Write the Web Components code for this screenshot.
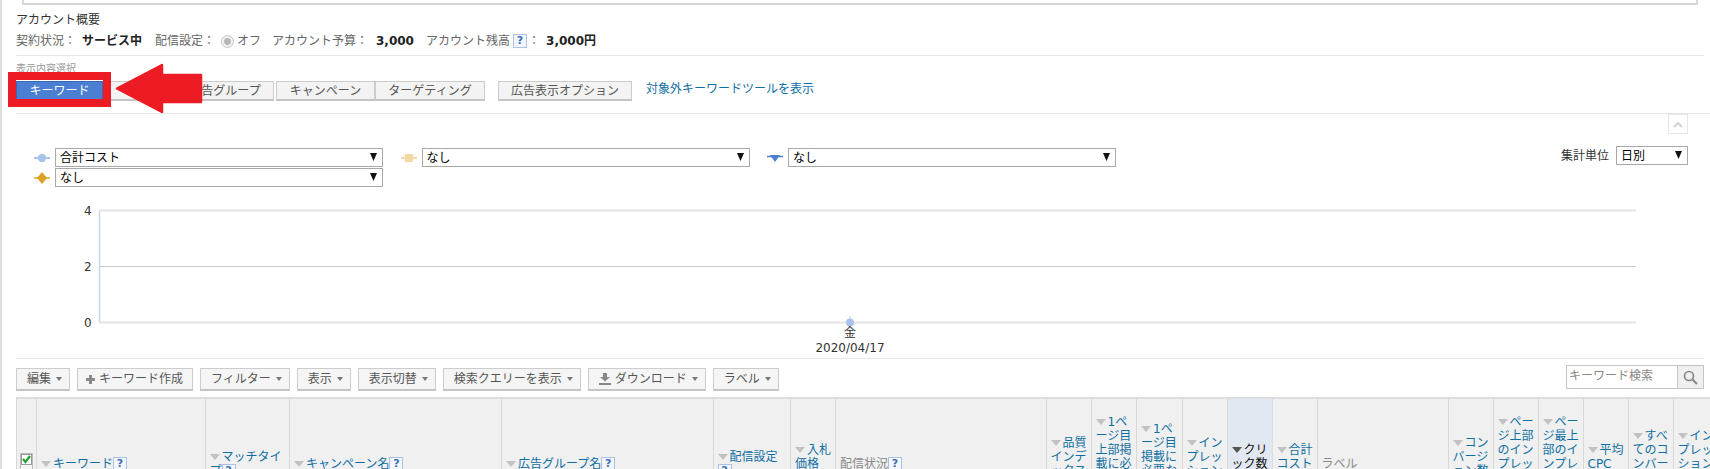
<!DOCTYPE html>
<html lang="ja">
<head>
<meta charset="utf-8">
<title>キーワード</title>
<style>
html,body{margin:0;padding:0;background:#fff;height:469px;overflow:hidden}
body{font:12px/14px "DejaVu Sans","Noto Sans CJK JP",sans-serif;color:#333}
</style>
</head>
<body>
<x-app>
  <x-account-summary></x-account-summary>
  <x-view-tabs></x-view-tabs>
  <x-chart-controls></x-chart-controls>
  <x-chart></x-chart>
  <x-toolbar></x-toolbar>
  <x-keyword-table></x-keyword-table>
</x-app>
<script>
const HELP = '<x-help></x-help>';
function el(name, css, html){
  customElements.define(name, class extends HTMLElement{
    constructor(){super();this.attachShadow({mode:'open'}).innerHTML='<style>'+css+'</style>'+html;}
  });
}
el('x-help',`:host{display:inline-block;box-sizing:border-box;width:14px;height:14px;border:1px solid #a9c0e8;background:#f3f6fc;color:#3d6db5;font:bold 11px/12px "DejaVu Sans",sans-serif;text-align:center;vertical-align:middle}`,'?');

el('x-app',`
:host{display:block;position:relative;box-sizing:border-box;width:1710px;height:469px;overflow:hidden;border-left:2px solid #ddd;padding-left:14px}
.top{box-sizing:border-box;height:5px;margin:0 12px 0 6px;border:2px solid #d8d8d8;border-top:0}
.frame{position:absolute;left:6px;top:72px;box-sizing:border-box;width:103px;height:35px;border:8px solid #ed1c24}
svg{position:absolute;left:-2px;top:0;pointer-events:none}
`,`
<div class="top"></div>
<slot></slot>
<div class="frame"></div>
<svg width="220" height="120"><path d="M117 88.5L162 65V75H201V102H162V112Z" fill="#ed1c24" stroke="#ed1c24" stroke-width="2.5" stroke-linejoin="round"/></svg>
`);

el('x-account-summary',`
:host{display:block;padding-top:6px;height:44px;border-bottom:1px solid #e6e6e6;margin-right:6px;color:#666}
.t{line-height:18px;color:#333}
.r{display:flex;align-items:center;height:18px;margin-top:3px;white-space:nowrap}
b{color:#222}
.radio{margin:0 3px 0 6px}
`,`
<div class="t">アカウント概要</div>
<div class="r">
 <span style="width:66px">契約状況：</span><b style="width:73px">サービス中</b><span>配信設定：</span>
 <svg class="radio" width="13" height="13" viewBox="0 0 13 13"><circle cx="6.5" cy="6.5" r="6" fill="#f2f2f2" stroke="#c4c4c4"/><circle cx="6.5" cy="6.5" r="3.4" fill="#b5b5b5"/></svg>
 <span style="width:35px">オフ</span><span style="width:104px">アカウント予算：</span><b style="width:50px">3,000</b>
 <span style="margin-right:3px">アカウント残高</span>${HELP}<span style="margin:0 6px 0 1px;width:12px">：</span><b>3,000円</b>
</div>`);

el('x-tab',`:host{display:block;box-sizing:border-box;height:20px;border:1px solid #ccc;border-bottom:2px solid #c4c4c4;background:#f3f3f3;color:#555;line-height:19px;text-align:center;white-space:nowrap}
:host([active]){background:#4a7fd3;border:1px solid #3a68ad;color:#fff;height:19px;line-height:18px}`,'<slot></slot>');

el('x-view-tabs',`
:host{display:block;padding-top:7px;border-bottom:1px solid #e6e6e6;height:50px}
.l{font-size:10px;line-height:12px;color:#999;height:12px}
.r{display:flex;align-items:flex-start;margin-top:6px}
a{color:#0f6ea3;text-decoration:none;margin-left:14px;line-height:17px;white-space:nowrap}
`,`
<div class="l">表示内容選択</div>
<div class="r">
 <x-tab active style="width:87px">キーワード</x-tab>
 <x-tab style="width:73px">広告</x-tab>
 <x-tab style="width:98px">広告グループ</x-tab>
 <x-tab style="width:99px;margin-left:2px">キャンペーン</x-tab>
 <x-tab style="width:110px">ターゲティング</x-tab>
 <x-tab style="width:134px;margin-left:13px">広告表示オプション</x-tab>
 <a href="#">対象外キーワードツールを表示</a>
</div>`);

el('x-select',`
:host{display:flex;align-items:center;justify-content:space-between;box-sizing:border-box;height:19px;background:#fff;border:1px solid #a9a9a9;color:#000;padding:1px 5px 0 4px;white-space:nowrap}
svg{margin-top:-3px}
`,`<slot></slot><svg width="7" height="8" viewBox="0 0 7 8"><path d="M0 0H7L3.5 8Z" fill="#111"/></svg>`);

el('x-chart-controls',`
:host{display:block;height:76px}
.up{display:flex;justify-content:flex-end;padding-right:22px}
.btn{box-sizing:border-box;width:20px;height:20px;border:1px solid #e6e6e6;display:flex;align-items:center;justify-content:center}
.row{display:flex;justify-content:space-between;align-items:flex-start;padding:12px 22px 0 18px}
.grid{display:grid;grid-template-columns:repeat(3,349px);column-gap:17.5px;row-gap:1px;margin-top:2px}
.g{display:flex;align-items:center;gap:5px}
.g svg{flex:none}
x-select{flex:1}
.unit{display:flex;align-items:center;gap:7px;color:#333}
.unit x-select{flex:none;width:72px}
`,`
<div class="up"><div class="btn"><svg width="10" height="7" viewBox="0 0 10 7"><path d="M1 6L5 2L9 6" fill="none" stroke="#d4d4d4" stroke-width="2"/></svg></div></div>
<div class="row">
<div class="grid">
 <div class="g"><svg width="16" height="10" viewBox="0 0 16 10"><path d="M0 5H16" stroke="#a9c4ea" stroke-width="2"/><circle cx="8" cy="5" r="4.2" fill="#a9c4ea"/></svg><x-select>合計コスト</x-select></div>
 <div class="g"><svg width="16" height="10" viewBox="0 0 16 10"><path d="M0 5H16" stroke="#f0d9a4" stroke-width="2"/><rect x="4" y="1" width="8" height="8" fill="#f0d9a4"/></svg><x-select>なし</x-select></div>
 <div class="g"><svg width="16" height="10" viewBox="0 0 16 10"><path d="M0 3.5H16" stroke="#4d7fd0" stroke-width="1.5"/><path d="M3 2H13L8 9Z" fill="#4d7fd0"/></svg><x-select>なし</x-select></div>
 <div class="g"><svg width="16" height="12" viewBox="0 0 16 12"><path d="M0 6H16" stroke="#dba21f" stroke-width="1.5"/><path d="M8 0L13 6L8 12L3 6Z" fill="#dba21f"/></svg><x-select>なし</x-select></div>
</div>
<div class="unit"><span>集計単位</span><x-select>日別</x-select></div>
</div>`);

el('x-chart',`
:host{display:block;height:168px;border-bottom:1px solid #e6e6e6;margin-right:6px}
svg{display:block}
text{font:12px "DejaVu Sans","Noto Sans CJK JP",sans-serif;fill:#333}
`,`
<svg width="1688" height="168" viewBox="16 190 1688 168">
 <path d="M99.5 210V322" stroke="#c5d6ee" stroke-width="1.5"/>
 <path d="M99 210.5H1636" stroke="#e3e3e3" stroke-width="2"/>
 <path d="M99 266.5H1636" stroke="#cccccc"/>
 <path d="M99 322.5H1636" stroke="#e3e3e3" stroke-width="2"/>
 <path d="M850 316V322" stroke="#e3e3e3" stroke-width="2"/>
 <circle cx="850" cy="322.5" r="4" fill="#a9c4ea"/>
 <text x="84" y="214.500">4</text><text x="84" y="270.500">2</text><text x="84" y="326.500">0</text>
 <text x="850" y="337" text-anchor="middle">金</text>
 <text x="850" y="351.500" text-anchor="middle">2020/04/17</text>
</svg>`);

el('x-tool',`:host{display:flex;align-items:center;box-sizing:border-box;height:23px;padding:0 7px 0 10px;border:1px solid #ccc;border-bottom:2px solid #c4c4c4;background:#f5f5f5;color:#555;white-space:nowrap}
.c{margin-left:5px;width:0;height:0;border:3.5px solid transparent;border-top:4px solid #777;border-bottom:0}
:host([nocaret]) .c{display:none}
:host([nocaret]){padding-right:9px;padding-left:8px}`,`<slot></slot><span class="c"></span>`);

el('x-toolbar',`
:host{display:flex;justify-content:space-between;align-items:flex-start;height:32px;padding-top:6px;margin-right:6px}
.b{display:flex;gap:7px;margin-top:3px}
svg{margin-right:4px;flex:none}
.s{display:flex;box-sizing:border-box;width:138px;height:24px;border:1px solid #c4c4c4}
.i{flex:1;padding-left:2px;line-height:21px;color:#888;white-space:nowrap}
.g{width:25px;background:#efefef;border-left:1px solid #c4c4c4;display:flex;align-items:center;justify-content:center}
.g svg{margin:0}
`,`
<div class="b">
 <x-tool>編集</x-tool>
 <x-tool nocaret><svg width="9" height="9" viewBox="0 0 9 9"><path d="M3 0H6V3H9V6H6V9H3V6H0V3H3Z" fill="#888"/></svg>キーワード作成</x-tool>
 <x-tool>フィルター</x-tool>
 <x-tool>表示</x-tool>
 <x-tool>表示切替</x-tool>
 <x-tool>検索クエリーを表示</x-tool>
 <x-tool><svg width="12" height="12" viewBox="0 0 12 12"><path d="M4 0H8V4H11L6 8.500L1 4H4Z" fill="#888"/><path d="M0 10H12V12H0Z" fill="#888"/></svg>ダウンロード</x-tool>
 <x-tool>ラベル</x-tool>
</div>
<div class="s"><div class="i">キーワード検索</div><div class="g"><svg width="15" height="15" viewBox="0 0 15 15"><circle cx="6" cy="6" r="4.500" fill="none" stroke="#888" stroke-width="1.700"/><path d="M9.500 9.500L14 14" stroke="#888" stroke-width="2.200"/></svg></div></div>`);

const cols = [
 [20,null],
 [168.5,['▾キーワード?']],
 [84.5,['▾マッチタイ','プ?']],
 [212,['▾キャンペーン名?']],
 [211.5,['▾広告グループ名?']],
 [77.5,['▾配信設定','?']],
 [45,['▾入札','価格','?']],
 [210.5,['配信状況?'],'g'],
 [45,['▾品質','インデ','ックス','?']],
 [45.5,['▾1ペ','ージ目','上部掲','載に必','要な入','札単価','?']],
 [45.5,['▾1ペ','ージ目','掲載に','必要な','入札単','価?']],
 [45,['▾イン','プレッ','ション','数?']],
 [45,['▾クリ','ック数','?'],'s'],
 [45,['▾合計','コスト','?']],
 [131,['ラベル'],'g'],
 [45,['▾コン','バージ','ョン数','?']],
 [45,['▾ペー','ジ上部','のイン','プレッ','ション','シェア','?']],
 [45,['▾ペー','ジ最上','部のイ','ンプレ','ッショ','ンシェ','?']],
 [45,['▾平均','CPC','?']],
 [45,['▾すべ','てのコ','ンバー','ジョン','?']],
 [45,['▾イン','プレッ','ション','シェア','?']]
];
const line = t => {
  let s = t.replace('▾','<i></i>');
  if(s.endsWith('?')) s = s.slice(0,-1)+'<x-help></x-help>';
  return '<div class="l">'+s+'</div>';
};
const check = `<svg width="13" height="22" viewBox="0 0 13 22"><path d="M.5.500H12.500V17L6.500 21.500L.5 17Z" fill="#f4f4f4" stroke="#bbb"/><rect x="1.500" y="1.500" width="10" height="10" fill="#fff" stroke="#999"/><path d="M3 6L5.500 9L10 3" fill="none" stroke="#1fa52c" stroke-width="2.200"/></svg>`;
el('x-keyword-table',`
:host{display:block;width:1710px;height:72px;overflow:hidden}
table{border-collapse:collapse;table-layout:fixed;width:${cols.reduce((a,c)=>a+c[0],0)}px;border-top:2px solid #ddd}
th{box-sizing:border-box;height:130px;padding:0 0 0 4px;background:#f0f0f0;border-right:1px solid #d8d8d8;border-left:1px solid #d8d8d8;font-weight:normal;text-align:left;vertical-align:middle;color:#0f6ea3;overflow:hidden}
th.g{color:#888}
th.s{background:#e1e8f2;color:#111;border-color:#d5deeb}
.l{height:14px;line-height:14px;white-space:nowrap}
i{display:inline-block;width:0;height:0;border:5px solid transparent;border-top:6px solid #c2c2c2;border-bottom:0;margin-right:2px;vertical-align:1px}
th.s i{border-top-color:#555}
th:first-child{padding:0 0 0 3px}
svg{display:block}
`,`<table><colgroup>${cols.map(c=>`<col style="width:${c[0]}px">`).join('')}</colgroup><thead><tr>${cols.map(c=>
  `<th class="${c[2]||''}">${c[1]?c[1].map(line).join(''):check}</th>`).join('')}</tr></thead></table>`);
</script>
</body>
</html>
